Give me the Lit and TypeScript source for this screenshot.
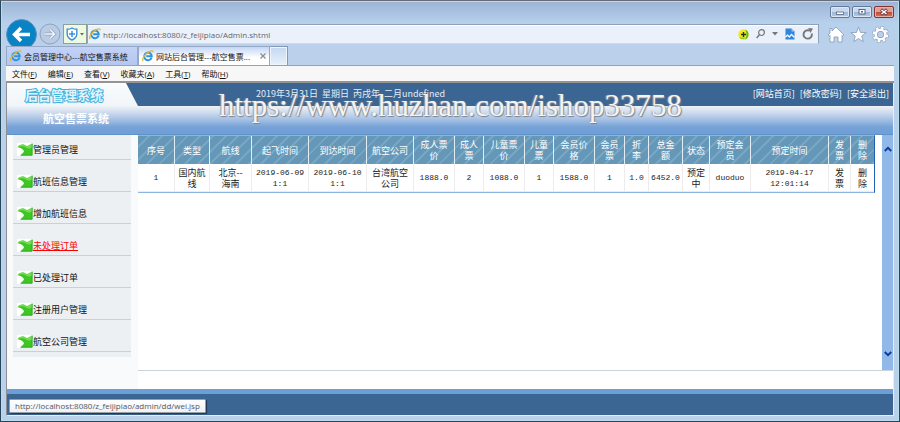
import { LitElement, html, css } from "lit";
import { customElement, property, state } from "lit/decorators.js";
import { classMap } from "lit/directives/class-map.js";

interface Column {
  width: number;
  head: string[];
  value: string[];
  numeric?: boolean;
}

const columns: Column[] = [
  { width: 37, head: ["序号"], value: ["1"], numeric: true },
  { width: 35, head: ["类型"], value: ["国内航", "线"] },
  { width: 42, head: ["航线"], value: ["北京--", "海南"] },
  { width: 57, head: ["起飞时间"], value: ["2019-06-09", "1:1"], numeric: true },
  { width: 58, head: ["到达时间"], value: ["2019-06-10", "1:1"], numeric: true },
  { width: 47, head: ["航空公司"], value: ["台湾航空", "公司"] },
  { width: 41, head: ["成人票", "价"], value: ["1888.0"], numeric: true },
  { width: 29, head: ["成人", "票"], value: ["2"], numeric: true },
  { width: 41, head: ["儿童票", "价"], value: ["1088.0"], numeric: true },
  { width: 29, head: ["儿童", "票"], value: ["1"], numeric: true },
  { width: 41, head: ["会员价", "格"], value: ["1588.0"], numeric: true },
  { width: 30, head: ["会员", "票"], value: ["1"], numeric: true },
  { width: 24, head: ["折", "率"], value: ["1.0"], numeric: true },
  { width: 34, head: ["总金", "额"], value: ["6452.0"], numeric: true },
  { width: 27, head: ["状态"], value: ["预定", "中"] },
  { width: 41, head: ["预定会", "员"], value: ["duoduo"], numeric: true },
  { width: 78, head: ["预定时间"], value: ["2019-04-17", "12:01:14"], numeric: true },
  { width: 22, head: ["发", "票"], value: ["发", "票"] },
  { width: 23, head: ["删", "除"], value: ["删", "除"] },
];

const totalWidth = columns.reduce((sum, c) => sum + c.width, 0);

const lines = (parts: string[]) =>
  parts.map((part, i) => (i ? html`<br />${part}` : part));

const ieLogo = html`<svg viewBox="0 0 12 12" width="12" height="12" aria-hidden="true">
  <path d="M9.6 7.6A3.8 3.8 0 1 1 9.8 6.3H4.2" fill="none" stroke="#2b95dc" stroke-width="1.9" />
  <path d="M1.2 11C-.8 9 3.4 3 8.4 1.2c2-.7 3-.2 2.5 1.2" fill="none" stroke="#e9b52c" stroke-width="1.3" />
</svg>`;

const turnArrow = html`<svg viewBox="0 0 16 13" width="16" height="13" aria-hidden="true">
  <rect width="16" height="13" fill="#fff" />
  <path d="M.5 4.200C2 1.600 6.500.2 10 3.200L15.200.6V12.300H3.600L7 8.800C6.600 6 3.600 4.600.5 4.200Z" fill="#3cc822" />
  <path d="M.5 4.200C2 1.600 6.500.2 10 3.200L15.200.6V4C12 7.500 10 4.600 7 3.600 5 2.900 2.500 3.400.5 4.200Z" fill="#78dc5a" />
  <path d="M15.200.6V12.300H3.600" fill="none" stroke="#249a1c" stroke-width=".8" />
</svg>`;

@customElement("browser-chrome")
class BrowserChrome extends LitElement {
  @property() url = "";
  @state() private tab = 1;

  static styles = css`
    :host {
      display: block;
      font-family: "Open Sans", "Noto Sans CJK SC", sans-serif;
      font-size: 8px;
      color: #111;
    }
    button {
      border: 0;
      padding: 0;
      margin: 0;
      background: none;
      font: inherit;
      color: inherit;
    }
    svg { display: block; flex: none; }
    .title {
      display: flex;
      justify-content: flex-end;
      align-items: flex-start;
      gap: 2px;
      height: 22px;
      padding-top: 4px;
      box-sizing: border-box;
    }
    .win {
      width: 20px;
      height: 12px;
      display: grid;
      place-items: center;
      border: 1px solid #64799a;
      border-radius: 2px;
      background: linear-gradient(#c9daee 45%, #9db5d3 50%, #b4cce8);
      box-shadow: inset 0 0 0 1px #dce8f5;
    }
    .win.close {
      border-color: #843332;
      background: linear-gradient(#dda095 45%, #be4a37 50%, #d5755c);
      box-shadow: inset 0 0 0 1px #e6b0a6;
    }
    .bar { display: flex; align-items: center; height: 20px; padding-bottom: 2px; }
    .nav {
      display: flex;
      align-items: center;
      gap: 2px;
      width: 57px;
      height: 20px;
    }
    .address {
      flex: 1;
      display: flex;
      align-items: center;
      height: 20px;
      box-sizing: border-box;
      border: 1px solid #8ea1ba;
      border-bottom-color: #cfdce2;
      background: #eaf1fb;
      box-shadow: inset 0 1px #fff;
    }
    .shield {
      display: flex;
      align-items: center;
      justify-content: center;
      gap: 2px;
      width: 24px;
      height: 20px;
      box-sizing: border-box;
      border: 1px solid #8fa09a;
      background: #eefae0;
    }
    .field {
      flex: 1;
      display: flex;
      align-items: center;
      gap: 2px;
      padding-left: 1px;
      min-width: 0;
    }
    .field input {
      flex: 1;
      min-width: 0;
      border: 0;
      padding: 0;
      outline: 0;
      background: none;
      font: 8px "Open Sans", sans-serif;
      color: #666;
    }
    .tools { display: flex; align-items: center; gap: 7px; padding-right: 4px; }
    .side { display: flex; align-items: center; gap: 5px; padding: 0 5px 0 8px; }
    .tabs {
      display: flex;
      position: relative;
      height: 20px;
      box-sizing: border-box;
      border-bottom: 1px solid #8da3c0;
      background: #bad0eb;
    }
    .tab {
      display: flex;
      align-items: center;
      gap: 2px;
      width: 132px;
      padding: 0 3px;
      box-sizing: border-box;
      border: 1px solid #95a8c6;
      border-bottom: 0;
      background: linear-gradient(#c3d2f6, #b2c7f2);
      white-space: nowrap;
    }
    .tab.on { background: linear-gradient(#c3d6f7, #fff 60%); }
    .tab span { flex: 1; text-align: left; }
    .new {
      width: 18px;
      border: 1px solid #8298b5;
      border-left: 0;
      border-bottom: 0;
      background: linear-gradient(#c3d8f0, #e8f0fa);
      box-shadow: inset 0 0 0 1px #eef5fc;
    }
    .menu {
      display: flex;
      gap: 11px;
      height: 15px;
      padding-left: 6px;
      background: #f7f7f7;
      border-bottom: 2px solid #949494;
    }
    .menu button { line-height: 15px; white-space: nowrap; }
  `;

  private renderTab(label: string, index: number) {
    return html`<button
      class=${classMap({ tab: true, on: this.tab === index })}
      role="tab"
      aria-selected=${this.tab === index}
      @click=${() => (this.tab = index)}
    >
      ${ieLogo}<span>${label}</span>
      ${index === 1
        ? html`<svg viewBox="0 0 6 6" width="6" height="6"><path d="M.5.5l5 5M5.500.5l-5 5" stroke="#8b8b8b" stroke-width="1.200" /></svg>`
        : ""}
    </button>`;
  }

  render() {
    return html`
      <div class="title">
        <button class="win" aria-label="最小化">
          <svg viewBox="0 0 8 8" width="8" height="8"><rect x=".5" y="4" width="7" height="2.500" fill="#fff" stroke="#566883" stroke-width=".8" /></svg>
        </button>
        <button class="win" aria-label="最大化">
          <svg viewBox="0 0 8 8" width="8" height="8"><rect x="1" y="1.500" width="6" height="4.500" fill="#fff" stroke="#566883" /><rect x="3" y="3" width="2" height="1.500" fill="#566883" /></svg>
        </button>
        <button class="win close" aria-label="关闭">
          <svg viewBox="0 0 8 8" width="8" height="8"><path d="M1 1.500l6 5M7 1.500l-6 5" stroke="#6b3a44" stroke-width="3" /><path d="M1.500 2l5 4M6.500 2l-5 4" stroke="#fff" stroke-width="1.600" /></svg>
        </button>
      </div>
      <div class="bar">
        <div class="nav">
          <button aria-label="后退">
            <svg viewBox="0 0 31 31" width="31" height="31">
              <circle cx="15.500" cy="15.500" r="15" fill="#0a83c4" stroke="#5e91ba" />
              <path d="M24 15.500H9M15 9l-6.500 6.500L15 22" fill="none" stroke="#fff" stroke-width="3.400" />
            </svg>
          </button>
          <button aria-label="前进">
            <svg viewBox="0 0 22 22" width="22" height="22">
              <circle cx="11" cy="11" r="10" fill="#b9cce4" stroke="#8fa3c0" />
              <path d="M5.500 11H15M11 6.500l4.500 4.500-4.500 4.500" fill="none" stroke="#8fa3c0" stroke-width="3" />
              <path d="M5.500 11H15M11 6.500l4.500 4.500-4.500 4.500" fill="none" stroke="#eef4fb" stroke-width="1.600" />
            </svg>
          </button>
        </div>
        <button class="shield" aria-label="安全">
          <svg viewBox="0 0 12 14" width="12" height="14">
            <path d="M6 1C4.500 2 3 2.300 1.200 2.300V7c0 3 2 4.800 4.800 6 2.800-1.200 4.800-3 4.800-6V2.300C9 2.300 7.500 2 6 1Z" fill="#fff" stroke="#3c8ee0" stroke-width="1.400" />
            <path d="M6 4v6M3 7h6" stroke="#3c8ee0" stroke-width="1.500" />
          </svg>
          <svg viewBox="0 0 4 3" width="4" height="3"><path d="M0 0h4L2 2.500Z" fill="#666" /></svg>
        </button>
        <div class="address">
          <label class="field">${ieLogo}<input aria-label="地址" .value=${this.url} /></label>
          <div class="tools">
            <button aria-label="添加">
              <svg viewBox="0 0 11 11" width="11" height="11">
                <circle cx="5.500" cy="5.500" r="5.200" fill="#f6e61c" />
                <path d="M7 .6a5.200 5.200 0 0 1 0 9.800C9 8 9 3 7 .6ZM1 8c3 1 5 1 7 .5a5.200 5.200 0 0 1-7-.5Z" fill="#4cb83c" />
                <path d="M5.500 3v5M3 5.500h5" stroke="#20351c" stroke-width="1.400" />
              </svg>
            </button>
            <button aria-label="搜索">
              <svg viewBox="0 0 9 10" width="9" height="10"><circle cx="5.500" cy="3.600" r="2.900" fill="none" stroke="#777" stroke-width="1.200" /><path d="M3.400 5.800L.6 9" stroke="#777" stroke-width="1.500" /></svg>
            </button>
            <button aria-label="更多">
              <svg viewBox="0 0 6 4" width="6" height="4"><path d="M0 0h6L3 3.500Z" fill="#777" /></svg>
            </button>
            <button aria-label="兼容性视图">
              <svg viewBox="0 0 10 12" width="10" height="12"><path d="M.5.5h6l3 3v8h-9Z" fill="#2f86dd" /><path d="M6.500.5v3h3" fill="#9cc8f5" /><path d="M.5 9l2-2 1.800 2L6.500 6.500l3 3" fill="none" stroke="#fff" stroke-width="1.200" /></svg>
            </button>
            <button aria-label="刷新">
              <svg viewBox="0 0 12 12" width="12" height="12"><path d="M9.800 5.500A4.200 4.200 0 1 1 7.500 2.600" fill="none" stroke="#777" stroke-width="1.900" /><path d="M6.200 0L11 .4 8.400 5Z" fill="#777" /></svg>
            </button>
          </div>
        </div>
        <div class="side">
          <button aria-label="主页">
            <svg viewBox="0 0 18 17" width="18" height="17"><path d="M9 1l8 8-1.500 1L15 9.500V16h-4v-5H7v5H3V9.500L2.500 10 1 9l2-2V2.500h2V5Z" fill="#fff" stroke="#8499b5" stroke-width=".8" /></svg>
          </button>
          <button aria-label="收藏">
            <svg viewBox="0 0 17 17" width="17" height="17"><path d="M8.500 1l2 5.400 5.700.2-4.500 3.500 1.600 5.600-4.800-3.200-4.800 3.200 1.600-5.600L.8 6.600l5.700-.2Z" fill="#fff" stroke="#8499b5" stroke-width=".8" /></svg>
          </button>
          <button aria-label="设置">
            <svg viewBox="0 0 17 17" width="17" height="17">
              <circle cx="8.500" cy="8.500" r="6.800" fill="none" stroke="#8499b5" stroke-width="3.300" stroke-dasharray="3.200 2.140" />
              <circle cx="8.500" cy="8.500" r="4.800" fill="none" stroke="#8499b5" stroke-width="4" />
              <circle cx="8.500" cy="8.500" r="6.800" fill="none" stroke="#fff" stroke-width="2.200" stroke-dasharray="2.600 2.740" stroke-dashoffset="-.3" />
              <circle cx="8.500" cy="8.500" r="4.800" fill="none" stroke="#fff" stroke-width="2.600" />
            </svg>
          </button>
        </div>
      </div>
      <div class="tabs" role="tablist">
        ${this.renderTab("会员管理中心---航空售票系统", 0)}
        ${this.renderTab("网站后台管理---航空售票...", 1)}
        <button class="new" aria-label="新建标签页"></button>
      </div>
      <div class="menu" role="menubar">
        ${[["文件", "F"], ["编辑", "E"], ["查看", "V"], ["收藏夹", "A"], ["工具", "T"], ["帮助", "H"]].map(
          ([label, key]) => html`<button role="menuitem">${label}(<u>${key}</u>)</button>`,
        )}
      </div>
    `;
  }
}

@customElement("order-table")
class OrderTable extends LitElement {
  static styles = css`
    :host { display: block; }
    table {
      width: 100%;
      table-layout: fixed;
      border-collapse: separate;
      border-spacing: 0;
      border: 1px solid #8fb4e0;
      border-right-color: #1f5fb4;
      border-left: 0;
      font: 9px/11px "Noto Sans CJK SC", sans-serif;
      text-align: center;
      color: #222;
      background: #fff;
    }
    th, td { padding: 0; box-sizing: border-box; font-weight: 400; white-space: nowrap; }
    thead {
      background: repeating-linear-gradient(135deg, #6497b8 0 7px, #78a7c3 7px 9px);
      color: #fff;
    }
    th { height: 28px; border-right: 1px solid #e3edf4; }
    td { height: 28px; border-right: 1px solid #ececec; border-bottom: 1px solid #ececec; }
    th:last-child, td:last-child { border-right: 0; }
    .num { font-family: "Liberation Mono", monospace; font-size: 8px; }
    a { color: inherit; text-decoration: none; }
  `;

  render() {
    return html`<table>
      <colgroup>
        ${columns.map((c) => html`<col style="width:${(c.width / totalWidth) * 100}%" />`)}
      </colgroup>
      <thead>
        <tr>${columns.map((c) => html`<th scope="col">${lines(c.head)}</th>`)}</tr>
      </thead>
      <tbody>
        <tr>
          ${columns.map((c, i) =>
            i >= columns.length - 2
              ? html`<td><a href="#">${lines(c.value)}</a></td>`
              : html`<td class=${classMap({ num: !!c.numeric })}>${lines(c.value)}</td>`,
          )}
        </tr>
      </tbody>
    </table>`;
  }
}

@customElement("app-root")
class AppRoot extends LitElement {
  private items = [
    "管理员管理",
    "航班信息管理",
    "增加航班信息",
    "未处理订单",
    "已处理订单",
    "注册用户管理",
    "航空公司管理",
  ];

  static styles = css`
    :host {
      display: flex;
      flex-direction: column;
      min-height: 100vh;
      box-sizing: border-box;
      padding: 1px 5px 5px;
      border: 1px solid #24465a;
      border-top-color: #666b75;
      background: linear-gradient(#9cb4d5, #b7d0eb 22px, #bad0eb 44px);
      box-shadow: inset 0 0 0 1px #b9dcec;
      font: 9px "Noto Sans CJK SC", sans-serif;
    }
    a { text-decoration: none; }
    .page {
      position: relative;
      flex: 1;
      display: flex;
      flex-direction: column;
      background: #fff;
      border-left: 1px solid #8c8f94;
      border-bottom: 1px solid #e6edf5;
      border-right: 1px solid #e6edf5;
    }
    .top {
      display: flex;
      height: 23px;
      background: #3b6592;
      color: #e4edf7;
    }
    .brand {
      flex: none;
      width: 131px;
      box-sizing: border-box;
      padding-left: 18px;
      background: linear-gradient(#fafcfd, #f0f5f9);
      clip-path: polygon(0 0, 119px 0, 131px 100%, 0 100%);
      font: 700 13px/23px "Noto Sans CJK SC", sans-serif;
      color: #e2f4fc;
      -webkit-text-stroke: 2px #3fb2de;
      paint-order: stroke fill;
    }
    .date { flex: 1; padding-left: 118px; line-height: 21px; white-space: pre; }
    .links { display: flex; gap: 5px; padding-right: 4px; line-height: 21px; }
    .links a { color: #fff; }
    .banner {
      height: 29px;
      box-sizing: border-box;
      padding-left: 36px;
      background: linear-gradient(#f0f3f7, #b4cae7 40%, #76a2d8 75%, #6f9fd5);
      border-bottom: 1px solid #5f92ca;
      color: #fff;
      font: 700 11px/24px "Noto Sans CJK SC", sans-serif;
    }
    .mark {
      position: absolute;
      left: 212px;
      top: 6px;
      font: 31px/34px "Liberation Serif", serif;
      color: #f4f4f4;
      text-shadow: 1px 1px 1px #7d828a, -1px 0 1px #9a9fa7;
      pointer-events: none;
      white-space: nowrap;
    }
    .body { flex: 1; display: flex; }
    .side {
      flex: none;
      width: 131px;
      box-sizing: border-box;
      padding: 0 7px 32px 6px;
      background: #f8fafc;
    }
    nav { display: flex; flex-direction: column; gap: 7px; padding-bottom: 5px; background: #ecf0f2; }
    nav a {
      display: flex;
      align-items: center;
      height: 25px;
      box-sizing: border-box;
      padding: 5px 0 0 4px;
      border-bottom: 1px solid #cbd0d4;
      color: #111;
    }
    nav svg { display: block; flex: none; }
    nav a.hot { color: #f00; }
    nav a.hot span { text-decoration: underline; }
    .main { flex: 1; min-width: 0; display: flex; flex-direction: column; padding-bottom: 18px; }
    .frame {
      flex: 1;
      display: flex;
      border-bottom: 1px solid #cbd3dc;
    }
    .content { flex: 1; min-width: 0; padding-right: 7px; }
    .scroll {
      display: flex;
      flex-direction: column;
      justify-content: space-between;
      align-items: center;
      width: 11px;
      box-sizing: border-box;
      padding: 11px 0 13px;
      background: #90b9ea;
    }
    .scroll button { border: 0; padding: 0; background: none; }
    .scroll svg { display: block; }
    footer { height: 26px; box-sizing: border-box; border-top: 5px solid #6c9fd5; background: #3b6592; }
    .status {
      position: absolute;
      left: 2px;
      bottom: 2px;
      padding: 0 5px;
      font: 8px/12px "Open Sans", sans-serif;
      color: #575757;
      background: linear-gradient(#fff, #eef1f8);
      border: 1px solid #9a9fa6;
      border-radius: 1px;
      box-shadow: 1px 1px 1px #1d3653;
    }
  `;

  render() {
    return html`
      <browser-chrome url="http://localhost:8080/z_feijipiao/Admin.shtml"></browser-chrome>
      <div class="page">
        <header>
          <div class="top">
            <div class="brand">后台管理系统</div>
            <div class="date">2019年3月31日  星期日  丙戌年  二月undefined</div>
            <div class="links">
              <a href="#">[网站首页]</a><a href="#">[修改密码]</a><a href="#">[安全退出]</a>
            </div>
          </div>
          <div class="banner">航空售票系统</div>
        </header>
        <div class="mark">https://www.huzhan.com/ishop33758</div>
        <div class="body">
          <div class="side">
            <nav>
              ${this.items.map(
                (label, i) => html`<a href="#" class=${classMap({ hot: i === 3 })}>${turnArrow}<span>${label}</span></a>`,
              )}
            </nav>
          </div>
          <div class="main">
            <div class="frame">
              <div class="content"><order-table></order-table></div>
              <div class="scroll">
                <button aria-label="向上滚动">
                  <svg viewBox="0 0 8 6" width="8" height="6"><path d="M.8 5L4 1.800 7.200 5" fill="none" stroke="#0b3c9c" stroke-width="1.900" /></svg>
                </button>
                <button aria-label="向下滚动">
                  <svg viewBox="0 0 8 6" width="8" height="6"><path d="M.8 1L4 4.200 7.200 1" fill="none" stroke="#0b3c9c" stroke-width="1.900" /></svg>
                </button>
              </div>
            </div>
          </div>
        </div>
        <footer></footer>
        <div class="status">http://localhost:8080/z_feijipiao/admin/dd/wei.jsp</div>
      </div>
    `;
  }
}
